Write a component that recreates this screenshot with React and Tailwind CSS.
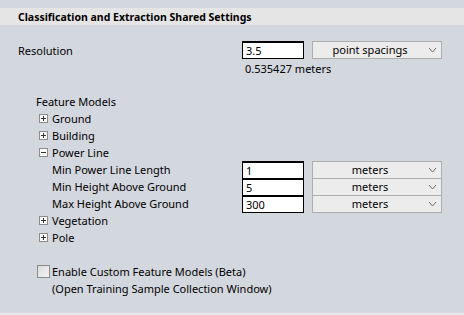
const FONT = "font-['Noto_Sans','Open_Sans',sans-serif]";

function Chevron() {
  return (
    <svg width="9" height="6" viewBox="0 0 9 6" className="shrink-0">
      <polyline points="1,1 4.5,5 8,1" fill="none" stroke="#6b6b6b" strokeWidth="1" />
    </svg>
  );
}

function Dropdown({ value }) {
  return (
    <div className="w-[130px] h-[18px] ml-[8px] flex items-center border border-[#adadad] bg-[#ececec]">
      <span className="flex-1 text-center leading-[16px] pl-[4px]">{value}</span>
      <span className="w-[18px] flex justify-center">
        <Chevron />
      </span>
    </div>
  );
}

function Field({ value }) {
  return (
    <div className="w-[62px] h-[18px] border border-black border-t-2 bg-white pl-[3px] leading-[15px]">
      {value}
    </div>
  );
}

function Toggle({ open }) {
  return (
    <span className="w-[9px] h-[9px] border border-[#8c8c8c] bg-[#fafafa] relative inline-block mr-[4px] shrink-0">
      <span className="absolute left-[1px] top-[3px] w-[5px] h-[1px] bg-[#333]" />
      {!open && <span className="absolute left-[3px] top-[1px] w-[1px] h-[5px] bg-[#333]" />}
    </span>
  );
}

function TreeRow({ label, open }) {
  return (
    <div className="h-[17px] flex items-center pl-[39px]">
      <Toggle open={open} />
      <span className="pt-[1px]">{label}</span>
    </div>
  );
}

function ParamRow({ label, value }) {
  return (
    <div className="h-[17px] flex items-center">
      <span className="w-[242px] pl-[52px] pt-[1px]">{label}</span>
      <Field value={value} />
      <Dropdown value="meters" />
    </div>
  );
}

export default function App() {
  return (
    <div className={`w-[464px] h-[315px] bg-[#d3d7de] text-[11px] text-black ${FONT} pt-[8px] overflow-hidden border-b-2 border-[#e6e8ec]`}>
      <div className="h-[17px] bg-[#e5e5e5] pl-[18px] font-bold text-[10.5px] leading-[18px]">
        Classification and Extraction Shared Settings
      </div>

      <div className="mt-[16px] h-[18px] flex items-center">
        <span className="w-[242px] pl-[18px] pt-[2px]">Resolution</span>
        <Field value="3.5" />
        <Dropdown value="point spacings" />
      </div>
      <div className="h-[17px] leading-[19px] pl-[245px]">0.535427 meters</div>

      <div className="mt-[17px]">
        <div className="h-[17px] leading-[18px] pl-[36px]">Feature Models</div>
        <TreeRow label="Ground" />
        <TreeRow label="Building" />
        <TreeRow label="Power Line" open />
        <ParamRow label="Min Power Line Length" value="1" />
        <ParamRow label="Min Height Above Ground" value="5" />
        <ParamRow label="Max Height Above Ground" value="300" />
        <TreeRow label="Vegetation" />
        <TreeRow label="Pole" />
      </div>

      <div className="mt-[17px] h-[17px] flex items-center pl-[37px]">
        <span className="w-[13px] h-[13px] border border-[#8a8a8a] bg-gradient-to-br from-[#dcdcdc] to-[#f4f4f4] mr-[2px]" />
        <span className="pt-[1px]">Enable Custom Feature Models (Beta)</span>
      </div>
      <div className="h-[17px] leading-[18px] pl-[52px]">(Open Training Sample Collection Window)</div>
    </div>
  );
}
